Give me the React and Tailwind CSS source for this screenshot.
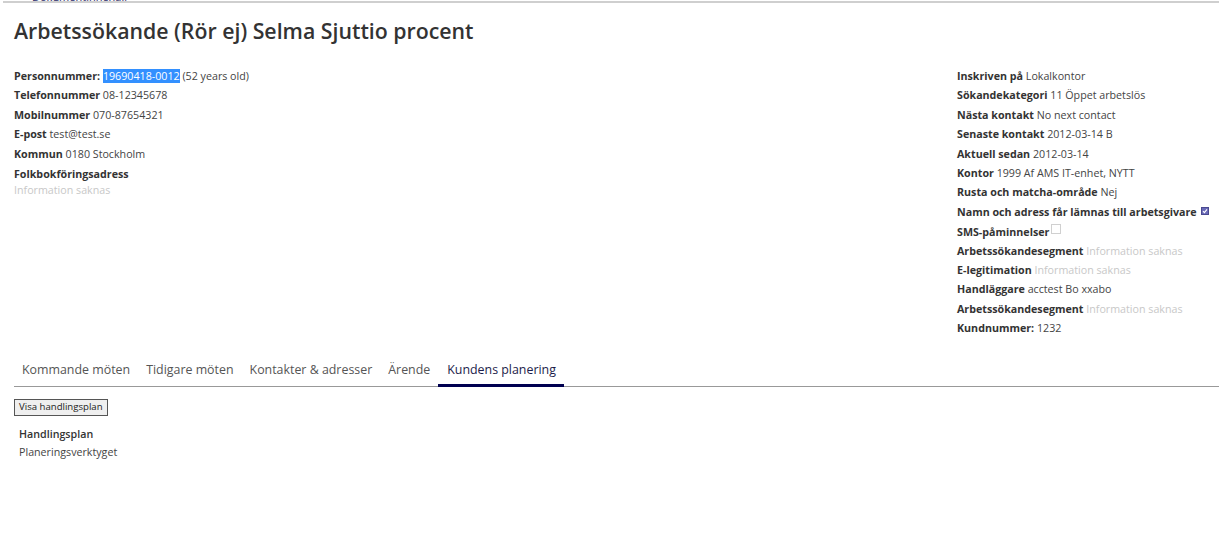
import React from 'react';

const font = { fontFamily: '"Open Sans", "Liberation Sans", sans-serif' };

function Row({ label, children }) {
  return (
    <div className="h-[19.4px] leading-[19px] whitespace-nowrap">
      <span className="font-bold text-[#333]">{label}</span> {children}
    </div>
  );
}

const Missing = () => <span className="text-[#c8c8c8]">Information saknas</span>;

export default function App() {
  const tabs = ['Kommande möten', 'Tidigare möten', 'Kontakter & adresser', 'Ärende', 'Kundens planering'];
  return (
    <div className="min-h-[550px] bg-white text-[#444] text-[10.7px]" style={font}>
      <div className="ml-[3px] mt-px h-[2px] bg-[#cfcfcf] relative overflow-visible">
        <div className="absolute left-[29px] -top-[12px] h-[13px] overflow-hidden text-[11px] text-[#2a2a6a]">Dokumentinnehåll</div>
      </div>
      <h1 className="mt-[13px] ml-[14px] text-[21.3px] font-semibold text-[#333] leading-[30px]">
        Arbetssökande (Rör ej) Selma Sjuttio procent
      </h1>

      <div className="flex justify-between mt-[21px] pl-[14px]">
        <div>
          <Row label="Personnummer:">
            <span className="bg-[#3390ff] text-white">19690418-0012</span> (52 years old)
          </Row>
          <Row label="Telefonnummer">08-12345678</Row>
          <Row label="Mobilnummer">070-87654321</Row>
          <Row label="E-post">test@test.se</Row>
          <Row label="Kommun">0180 Stockholm</Row>
          <div className="font-bold text-[#333] leading-[19px] mt-[1px]">Folkbokföringsadress</div>
          <div className="text-[#c8c8c8] leading-[13px]">Information saknas</div>
        </div>
        <div className="w-[262px]">
          <Row label="Inskriven på">Lokalkontor</Row>
          <Row label="Sökandekategori">11 Öppet arbetslös</Row>
          <Row label="Nästa kontakt">No next contact</Row>
          <Row label="Senaste kontakt">2012-03-14 B</Row>
          <Row label="Aktuell sedan">2012-03-14</Row>
          <Row label="Kontor">1999 Af AMS IT-enhet, NYTT</Row>
          <Row label="Rusta och matcha-område">Nej</Row>
          <div className="h-[19.4px] flex items-center whitespace-nowrap">
            <span className="font-bold text-[#333]">Namn och adress får lämnas till arbetsgivare</span>
            <span className="ml-[4px] w-[8px] h-[8px] bg-[#6a6ab8] border border-[#4a4a90] flex items-center justify-center mb-[2px]">
              <svg width="6" height="6" viewBox="0 0 6 6"><path d="M1 3.2 L2.4 4.6 L5 1.4" stroke="white" strokeWidth="1.1" fill="none" /></svg>
            </span>
          </div>
          <div className="h-[19.4px] flex items-center whitespace-nowrap">
            <span className="font-bold text-[#333]">SMS-påminnelser</span>
            <span className="ml-[2px] w-[10px] h-[10px] border border-[#d0d0d0] bg-white mb-[5px]"></span>
          </div>
          <Row label="Arbetssökandesegment"><Missing /></Row>
          <Row label="E-legitimation"><Missing /></Row>
          <Row label="Handläggare">acctest Bo xxabo</Row>
          <Row label="Arbetssökandesegment"><Missing /></Row>
          <Row label="Kundnummer:">1232</Row>
        </div>
      </div>

      <div className="mt-[17px] ml-[14px] flex border-b border-[#999] text-[12.4px]">
        {tabs.map((t, i) => (
          <div
            key={t}
            className={
              i === 4
                ? 'pl-[9px] pr-[8px] pt-[6px] pb-[3px] text-[#1c1c4a] border-b-[3px] border-[#000050] mb-[-1px]'
                : 'px-[8px] pt-[6px] pb-[6px] text-[#555]'
            }
          >
            {t}
          </div>
        ))}
      </div>

      <div className="mt-[11px] ml-[14px]">
        <button className="h-[17px] px-[4px] border border-[#555] bg-[#efefef] text-[9.6px] text-[#222] leading-[14px]" style={font}>
          Visa handlingsplan
        </button>
      </div>
      <div className="ml-[19px] mt-[9px] text-[10.7px]">
        <div className="font-semibold text-[#333] leading-[18px]">Handlingsplan</div>
        <div className="text-[#444] leading-[18px]">Planeringsverktyget</div>
      </div>
    </div>
  );
}
